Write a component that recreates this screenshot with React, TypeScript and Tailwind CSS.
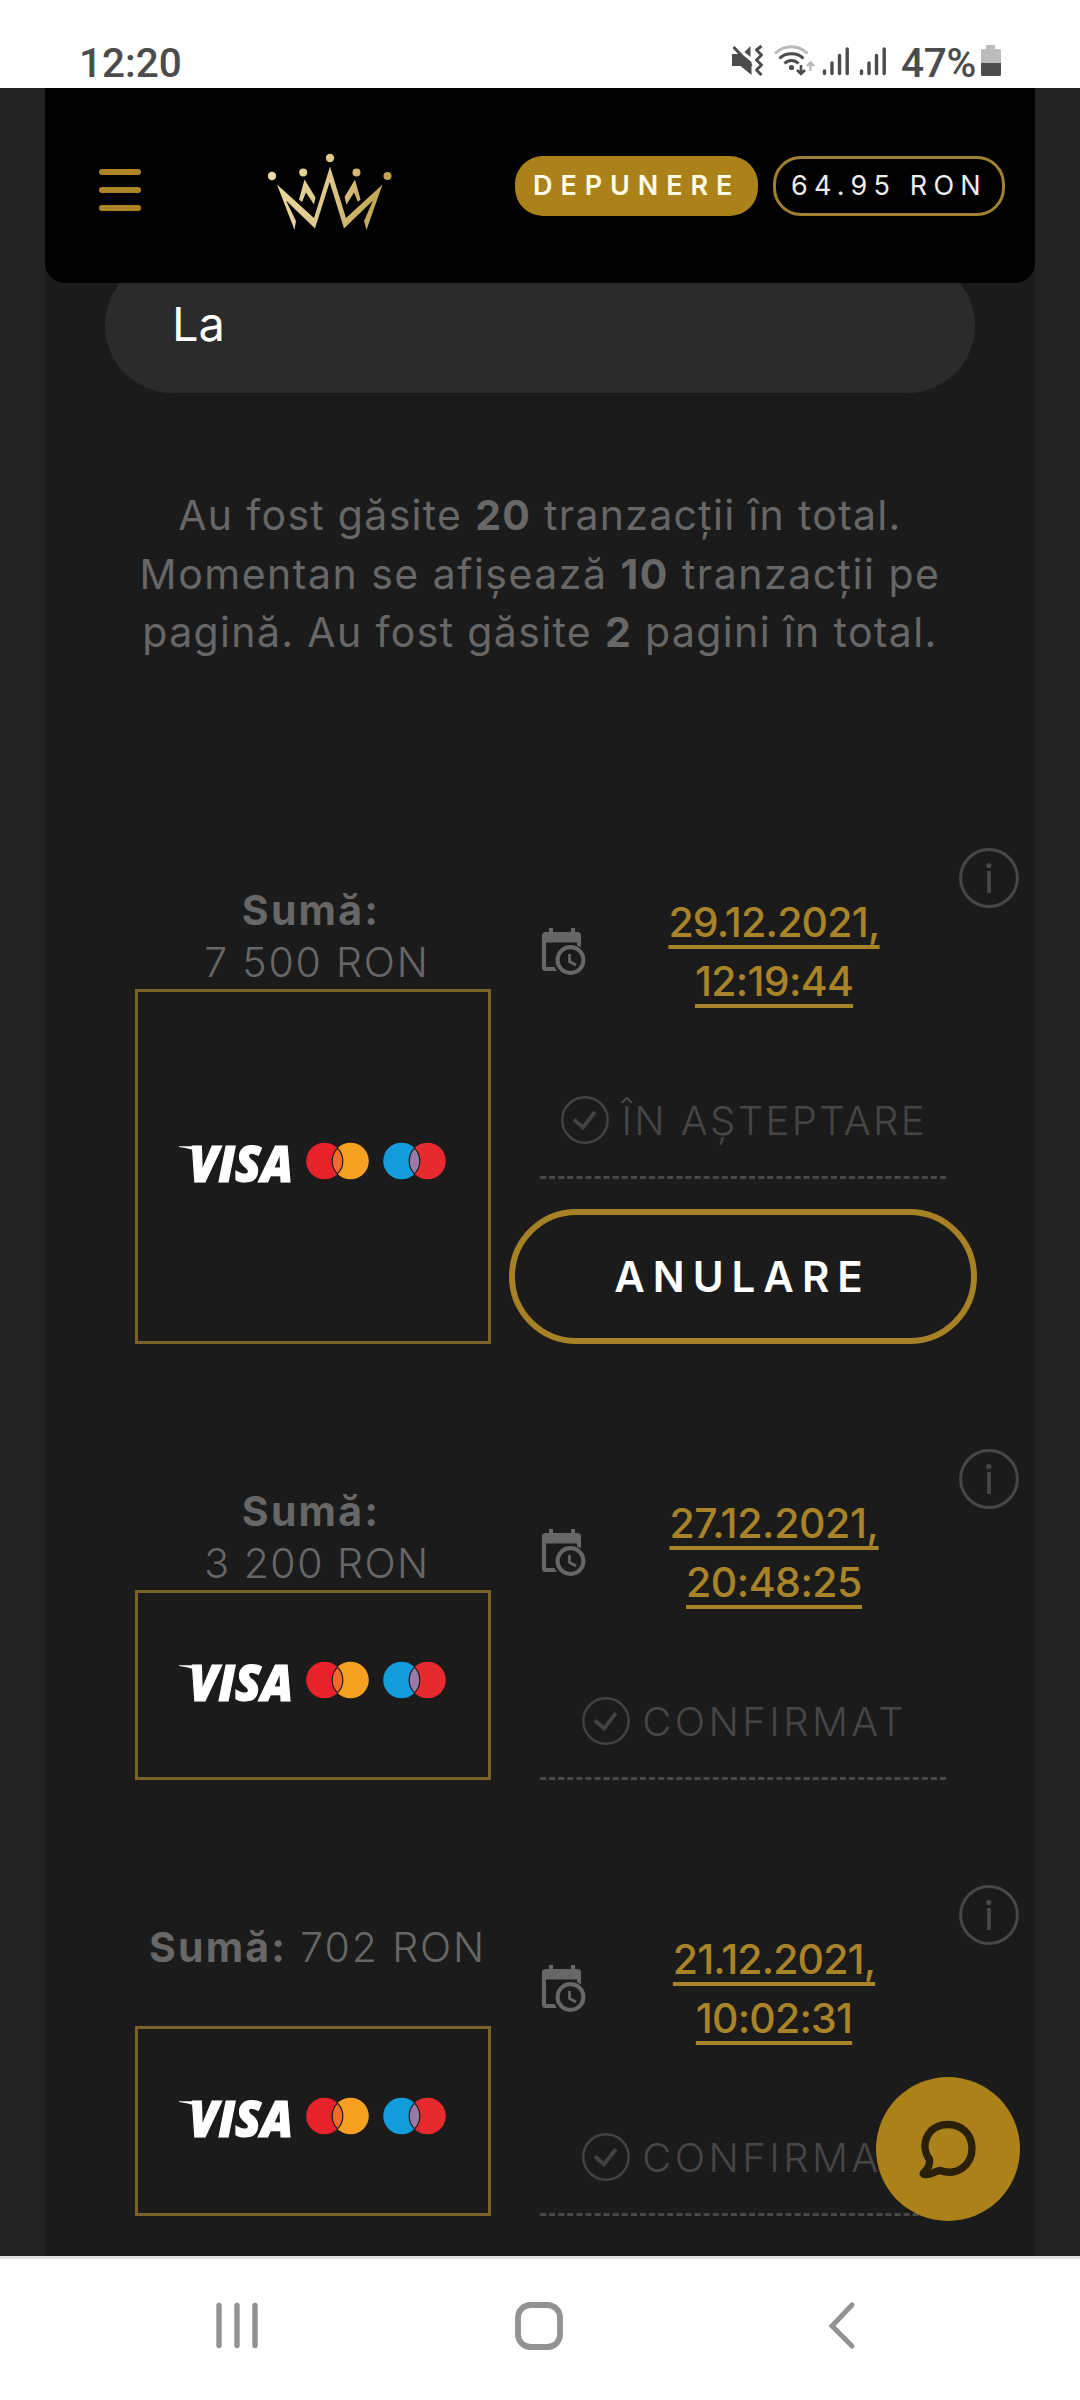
import React from 'react'

function StatusBar() {
  return (
    <div className="flex h-[88px] items-start justify-between bg-white pl-[79px] pr-[78px] font-['Roboto',sans-serif] text-[#4c4c4c]">
      <span className="mt-[43px] text-[40.5px] font-medium leading-[40px]">12:20</span>
      <div className="mt-[42px] flex h-10">
        <svg width="172" height="40" viewBox="732.500 42 172 40" className="shrink-0">
          <path d="M732 54h8l6 3 6 5v13l-11-9h-9z" fill="#4c4c4c" />
          <path d="M751 46v11l-6-5z" fill="#4c4c4c" />
          <path d="M734 47l18 19" stroke="#4c4c4c" strokeWidth="3" fill="none" />
          <path d="M762 46l-5 4 5 5-5 5 5 5-5 5 5 5" stroke="#4c4c4c" strokeWidth="3" fill="none" strokeLinejoin="round" />
          <path d="M775.500 53.500C785 44.500 799 44.500 808 53.500" stroke="#b9b9b9" strokeWidth="2.800" fill="none" />
          <path d="M780 58.500C786 52 798 52 804 58.500M785 63.500C789 59.500 795 59.500 799 63.500" stroke="#4c4c4c" strokeWidth="3" fill="none" />
          <circle cx="792" cy="67.500" r="2.600" fill="#4c4c4c" />
          <path d="M801.500 65v8M797.500 70l4 4 4-4" stroke="#4c4c4c" strokeWidth="2.600" fill="none" />
          <path d="M811 71v-8M807.500 66l3.500-3.500 3.500 3.500" stroke="#b9b9b9" strokeWidth="2.400" fill="none" />
          <g stroke="#4c4c4c" strokeWidth="3.400" strokeLinecap="round">
            <path d="M825 71v2.500M832.500 63v10.500M840 55.500v18M847.700 49v24.500" />
            <path d="M862 71v2.500M869.500 63v10.500M877 55.500v18M884.700 49v24.500" />
          </g>
        </svg>
        <span className="-ml-[3px] mt-px w-[79px] text-[40.5px] font-medium leading-[40px] tracking-[-0.3px]">47%</span>
        <svg width="22" height="40" viewBox="980 42 22 40" className="shrink-0">
          <path d="M986 45h9v4h4.500a1.500 1.500 0 0 1 1.500 1.500V63H981V50.500a1.500 1.500 0 0 1 1.500-1.500H986z" fill="#bcbcbc" />
          <path d="M981 63h20v11.500a1.500 1.500 0 0 1-1.500 1.500h-17a1.500 1.500 0 0 1-1.500-1.500z" fill="#4c4c4c" />
        </svg>
      </div>
    </div>
  )
}

function Crown() {
  return (
    <svg width="124" height="80" viewBox="0 0 124 80" className="mt-[68px]" fill="none">
      <defs>
        <linearGradient id="gold" gradientUnits="userSpaceOnUse" x1="0" y1="0" x2="124" y2="30">
          <stop offset="0" stopColor="#f0dfa6" />
          <stop offset="0.550" stopColor="#dcc688" />
          <stop offset="1" stopColor="#bd9f48" />
        </linearGradient>
      </defs>
      <g fill="url(#gold)">
        <circle cx="4" cy="25" r="4.200" />
        <circle cx="35.200" cy="21.500" r="4" />
        <circle cx="62" cy="7" r="4.200" />
        <circle cx="88.500" cy="21.500" r="4" />
        <circle cx="119.500" cy="25" r="4" />
        <path d="M9 33.500 46 67 62 15.500 78 67 114.500 33.500 98.500 79 96 70 105 49.500 76 77.500 61.700 31 47 77.500 18 49.500 28 70 26.500 79z" />
        <path d="M36.500 28.500 47.500 46.500 46 53.500 38 41.500 34 51 31 48.500z" />
        <path d="M87 28.500 92.500 48.500 90 51 86 41.500 78.500 53.500 76.500 46z" />
      </g>
    </svg>
  )
}

function Header() {
  return (
    <header className="relative z-10 flex h-[195px] items-start rounded-b-[20px] bg-black pl-[54px] pr-[30px]">
      <div className="mt-[81px] flex w-[42px] flex-col gap-3">
        <span className="h-[6px] rounded-full bg-[#aa8427]" />
        <span className="h-[6px] rounded-full bg-[#aa8427]" />
        <span className="h-[6px] rounded-full bg-[#aa8427]" />
      </div>
      <div className="-mt-[5px] ml-[127px] flex">
        <Crown />
      </div>
      <button className="ml-auto mt-[68px] h-[60px] w-[243px] rounded-[28px] bg-[#ab8219] pl-[18px] text-left text-[27px] font-semibold leading-[60px] tracking-[7.9px] text-[#fffbe6]">
        DEPUNERE
      </button>
      <button className="ml-[15px] mt-[68px] h-[60px] w-[232px] rounded-[28px] border-[3px] border-[#a1812f] pl-[15px] text-left text-[27px] leading-[54px] tracking-[6.2px] text-[#ededed]">
        64.95 RON
      </button>
    </header>
  )
}

function Cards() {
  return (
    <div className="absolute left-[42px] top-1/2 -mt-[46px] h-20">
      <svg width="280" height="80" viewBox="0 -15 280 80" className="overflow-visible">
        <path d="M-1 11.200H20L21 22C16 14.500 8 13 -1 12z" fill="#fff" />
        <text x="9" y="47" textLength="104" lengthAdjust="spacingAndGlyphs" fontFamily="'Open Sans', sans-serif" fontSize="49" fontWeight="800" fontStyle="italic" fill="#fff" stroke="#fff" strokeWidth="1.200">VISA</text>
        <circle cx="144.500" cy="26" r="18.300" fill="#e8222b" />
        <circle cx="170.500" cy="26" r="18.300" fill="#f7a021" />
        <path d="M157.500 13.100a18.300 18.300 0 0 1 0 25.800a18.300 18.300 0 0 1 0-25.800z" fill="#ef6b2c" stroke="#1b1b1b" strokeWidth="1.200" />
        <circle cx="221.500" cy="26" r="18.300" fill="#119ddb" />
        <circle cx="247.500" cy="26" r="18.300" fill="#e72a2e" />
        <path d="M234.500 13.100a18.300 18.300 0 0 1 0 25.800a18.300 18.300 0 0 1 0-25.800z" fill="#9a7aa8" stroke="#1b1b1b" strokeWidth="1.200" />
      </svg>
    </div>
  )
}

function CalendarClock() {
  return (
    <svg width="46" height="48" viewBox="0 0 46 48" className="mt-20 shrink-0">
      <path d="M9 0h4v4h18V0h4v4h2.500Q41 4 41 7.500V19.500a16 16 0 0 0-4-2V14.500H6V39H14.500a15 15 0 0 0 2.500 4H5.500Q2 43 2 39.500V7.500Q2 4 5.500 4H9z" fill="#676767" />
      <circle cx="30.500" cy="32" r="12.900" fill="none" stroke="#676767" strokeWidth="4.200" />
      <path d="M29.500 26v7.500l6.500 3.500" fill="none" stroke="#676767" strokeWidth="2.800" />
    </svg>
  )
}

function InfoIcon() {
  return (
    <svg width="60" height="60" viewBox="0 0 60 60" className="absolute right-4 top-0">
      <circle cx="30" cy="30" r="28.400" fill="none" stroke="#474747" strokeWidth="3" />
      <circle cx="29.800" cy="17.500" r="2.600" fill="#474747" />
      <path d="M30 23v22" stroke="#474747" strokeWidth="3.800" />
    </svg>
  )
}

function CheckIcon() {
  return (
    <svg width="48" height="48" viewBox="0 0 48 48" className="shrink-0">
      <circle cx="24" cy="24" r="22.700" fill="none" stroke="#434343" strokeWidth="2.400" />
      <path d="M13 23.500l9 8L34 16" fill="none" stroke="#434343" strokeWidth="3.800" />
    </svg>
  )
}

interface Tx {
  amount: string
  amountTracking: string
  wrap: boolean
  date: string
  dateTracking: string
  time: string
  timeTracking: string
  status: string
  statusTracking: string
  pending?: boolean
}

const transactions: Tx[] = [
  { amount: '7 500 RON', amountTracking: 'tracking-[1.8px]', wrap: true, date: '29.12.2021,', dateTracking: 'tracking-[-0.8px]', time: '12:19:44', timeTracking: 'tracking-[-0.7px]', status: 'ÎN AȘTEPTARE', statusTracking: 'tracking-[2.4px] -mr-[2.4px]', pending: true },
  { amount: '3 200 RON', amountTracking: 'tracking-[1.5px]', wrap: true, date: '27.12.2021,', dateTracking: 'tracking-[-0.4px]', time: '20:48:25', timeTracking: 'tracking-[-0.5px]', status: 'CONFIRMAT', statusTracking: 'tracking-[3.4px] -mr-[3.4px]' },
  { amount: '702 RON', amountTracking: 'tracking-[1.9px]', wrap: false, date: '21.12.2021,', dateTracking: 'tracking-[-0.9px]', time: '10:02:31', timeTracking: 'tracking-[-0.8px]', status: 'CONFIRMAT', statusTracking: 'tracking-[3.4px] -mr-[3.4px]' },
]

const dateLine = 'underline decoration-[4px] underline-offset-[8px] [text-decoration-skip-ink:none]'

function Transaction({ tx }: { tx: Tx }) {
  return (
    <section className="relative flex pl-[90px]">
      <div className="flex w-[356px] shrink-0 flex-col">
        <div className={`flex h-[141px] justify-center pt-9 text-[41px] leading-[52px] text-[#676767] ${tx.wrap ? 'flex-col items-center' : 'gap-[13px] pl-[9px]'}`}>
          <strong className={`font-bold tracking-[2.2px] ${tx.wrap ? '-ml-[4px]' : ''}`}>Sumă:</strong>
          <span className={`whitespace-nowrap font-light ${tx.amountTracking} ${tx.wrap ? 'ml-[8px]' : ''}`}>{tx.amount}</span>
        </div>
        <div className={`relative border-[3px] border-[#7a622a] ${tx.pending ? 'h-[355px]' : 'h-[190px]'}`}>
          <Cards />
        </div>
      </div>
      <div className="ml-[49px] w-[406px]">
        <div className="flex h-[248px]">
          <CalendarClock />
          <div className="ml-4 flex flex-1 flex-col items-center pt-[45.5px] text-[41px] font-[450] leading-[59px] text-[#a98328]">
            <a className={`${dateLine} ${tx.dateTracking}`}>{tx.date}</a>
            <a className={`${dateLine} ${tx.timeTracking}`}>{tx.time}</a>
          </div>
        </div>
        <div className="flex h-[83px] items-start justify-center gap-[12px] border-b-[3px] border-dashed border-[#474747] text-[40px] font-light leading-[49px] text-[#464646]">
          <CheckIcon />
          <span className={`whitespace-nowrap ${tx.statusTracking}`}>{tx.status}</span>
        </div>
        {tx.pending && (
          <button className="-ml-[31px] mt-[30px] block h-[135px] w-[468px] rounded-full border-[6px] border-[#a78125] pr-px text-center text-[42px] font-semibold leading-[123px] tracking-[8px] text-white">
            ANULARE
          </button>
        )}
      </div>
      <InfoIcon />
    </section>
  )
}

function ChatButton() {
  return (
    <button className="absolute left-[876px] top-[2077px] z-20 flex h-36 w-36 items-center justify-center rounded-full bg-[#ab8219]">
      <svg width="60" height="64" viewBox="0 0 60 64" className="mb-px" fill="none">
        <path d="M6 55.500C10 52 12 48 11.500 42.500C1 28 9.500 7.500 30 7.500C44 7.500 54 17.500 54 31.500C54 48 39 59.500 22 53.500C17 54 12 58.500 7.500 57.500C5 57.500 4.500 56.500 6 55.500Z" stroke="#2a200a" strokeWidth="7.400" strokeLinejoin="round" />
      </svg>
    </button>
  )
}

function NavBar() {
  return (
    <nav className="absolute inset-x-0 top-[2256px] flex h-36 items-start border-t-[3px] border-[#e0e0e0] bg-white">
      <svg width="44" height="50" viewBox="0 0 44 50" className="ml-[215px] mt-[42px]">
        <path d="M4 4.500v40M22 4.500v40M40 4.500v40" stroke="#929292" strokeWidth="5.400" strokeLinecap="round" />
      </svg>
      <svg width="50" height="50" viewBox="0 0 50 50" className="ml-[255px] mt-[42px]">
        <rect x="4" y="4" width="42" height="42" rx="12.500" fill="none" stroke="#929292" strokeWidth="5.800" />
      </svg>
      <svg width="30" height="50" viewBox="0 0 30 50" className="ml-[263px] mt-[42px]">
        <path d="M25 4 5 25 25 45" fill="none" stroke="#929292" strokeWidth="5" strokeLinecap="round" strokeLinejoin="miter" />
      </svg>
    </nav>
  )
}

export default function App() {
  return (
    <div className="relative h-[2400px] w-[1080px] overflow-hidden bg-[#222222] font-['Inter',sans-serif]">
      <StatusBar />
      <main className="mx-[45px] h-[2168px] bg-[#1b1b1b]">
        <Header />
        <div className="mx-[60px] -mt-[25px] h-[135px] rounded-full bg-[#2b2b2b] pl-[67px] text-[47px] leading-[132px] text-white">
          La
        </div>
        <p className="mt-[93px] flex flex-col items-center whitespace-nowrap text-[41px] leading-[58.5px] text-[#676767]">
          <span className="tracking-[1.3px]">Au fost găsite <b>20</b> tranzacții în total.</span>
          <span className="tracking-[1.5px]">Momentan se afișează <b>10</b> tranzacții pe</span>
          <span className="tracking-[1.35px]">pagină. Au fost găsite <b>2</b> pagini în total.</span>
        </p>
        <div className="mt-[186px] flex flex-col gap-[105px]">
          {transactions.map((tx) => (
            <Transaction key={tx.date} tx={tx} />
          ))}
        </div>
      </main>
      <ChatButton />
      <NavBar />
    </div>
  )
}
